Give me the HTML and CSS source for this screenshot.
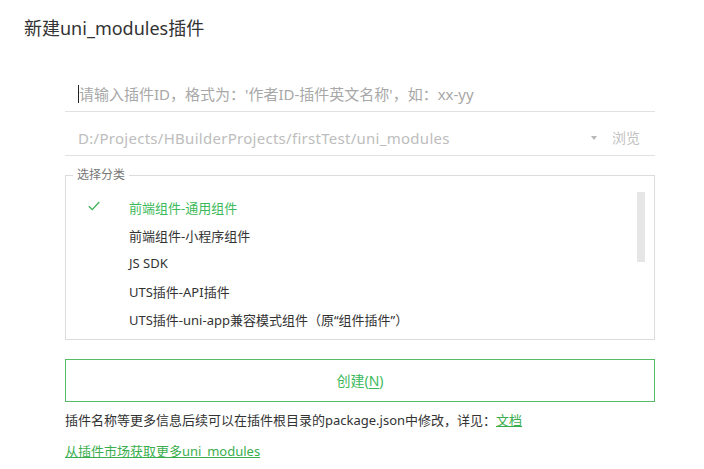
FILE: index.html
```html
<!DOCTYPE html>
<html lang="zh-CN">
<head>
<meta charset="utf-8">
<title>新建uni_modules插件</title>
<link rel="stylesheet" href="styles.css">
</head>
<body>
<div class="page">
  <h1 class="title">新建uni_modules插件</h1>
  <div class="form">
    <div class="row row-id">
      <span class="caret"></span><span class="placeholder">请输入插件ID，格式为：'作者ID-插件英文名称'，如：xx-yy</span>
    </div>
    <div class="row row-path">
      <span class="path">D:/Projects/HBuilderProjects/firstTest/uni_modules</span>
      <span class="drop"></span>
      <span class="browse">浏览</span>
    </div>
    <fieldset class="category">
      <legend class="legend">选择分类</legend>
      <ul class="list">
        <li class="item selected">
          <span class="check"><svg width="12" height="10" viewBox="0 0 12 10"><path d="M0.8 5.2 L4.3 8.6 L11.2 1" fill="none" stroke="#45b35a" stroke-width="1.4"/></svg></span>
          <span class="label">前端组件-通用组件</span>
        </li>
        <li class="item"><span class="check"></span><span class="label">前端组件-小程序组件</span></li>
        <li class="item"><span class="check"></span><span class="label">JS SDK</span></li>
        <li class="item"><span class="check"></span><span class="label">UTS插件-API插件</span></li>
        <li class="item"><span class="check"></span><span class="label">UTS插件-uni-app兼容模式组件（原“组件插件”）</span></li>
      </ul>
      <div class="thumb"></div>
    </fieldset>
    <button class="create" type="button">创建(<u>N</u>)</button>
    <p class="note">插件名称等更多信息后续可以在插件根目录的package.json中修改，详见：<a class="link" href="#">文档</a></p>
    <p class="more"><a class="link" href="#">从插件市场获取更多uni_modules</a></p>
  </div>
</div>
</body>
</html>
```

FILE: styles.css
```css
html, body {
  margin: 0;
  padding: 0;
  background: #ffffff;
}

body {
  font-family: "Noto Sans", "Noto Sans CJK SC", sans-serif;
  color: #333333;
}

.page {
  width: 704px;
  height: 469px;
  overflow: hidden;
}

.title {
  margin: 0;
  padding: 16px 0 0 24px;
  font-size: 18px;
  font-weight: normal;
  line-height: 24px;
  color: #333333;
}

.form {
  margin: 28px 0 0 65px;
  width: 590px;
}

.row {
  display: flex;
  align-items: flex-end;
  height: 44px;
  box-sizing: border-box;
  padding: 0 0 7px 13px;
  border-bottom: 1px solid #e2e2e2;
  font-size: 15px;
  line-height: 20px;
}

.caret {
  width: 1px;
  height: 18px;
  background: #222;
  margin-bottom: 1px;
}

.placeholder {
  color: #a8a8a8;
}

.path {
  color: #bdbdbd;
  flex: 1;
  letter-spacing: 0.28px;
}

.drop {
  width: 0;
  height: 0;
  border-left: 3px solid transparent;
  border-right: 3px solid transparent;
  border-top: 4px solid #b8b8b8;
  margin: 0 15px 8px 0;
}

.browse {
  color: #c2c2c2;
  font-size: 14px;
  margin-right: 15px;
}

.category {
  position: relative;
  margin: 11px 0 0 0;
  padding: 0 0 6px 0;
  border: 1px solid #dcdcdc;
  min-width: 0;
}

.legend {
  margin-left: 7px;
  padding: 0 4px;
  font-size: 12px;
  line-height: 16px;
  color: #777777;
}

.list {
  list-style: none;
  margin: 0;
  padding: 10px 0 0 0;
}

.item {
  display: flex;
  align-items: center;
  height: 28px;
  font-size: 13px;
  color: #333333;
}

.check {
  width: 63px;
  padding-left: 22px;
  box-sizing: border-box;
  display: flex;
  align-items: center;
  margin-top: -2px;
}

.selected .label {
  color: #3cb95a;
}

.thumb {
  position: absolute;
  right: 9px;
  top: 9px;
  width: 8px;
  height: 70px;
  background: #e6e6e6;
}

.create {
  display: block;
  width: 590px;
  height: 43px;
  margin-top: 19px;
  padding: 0;
  background: #ffffff;
  border: 1px solid #55bd66;
  color: #3cb95a;
  font-family: inherit;
  font-size: 14px;
  line-height: 20px;
  cursor: pointer;
}

.create u {
  text-decoration: underline;
  text-underline-offset: 2px;
}

.note {
  margin: 8px 0 0 0;
  font-size: 13px;
  line-height: 20px;
  color: #333333;
}

.more {
  margin: 11px 0 0 0;
  font-size: 13px;
  line-height: 20px;
}

.link {
  color: #3aae4e;
  text-decoration: underline;
}
```
